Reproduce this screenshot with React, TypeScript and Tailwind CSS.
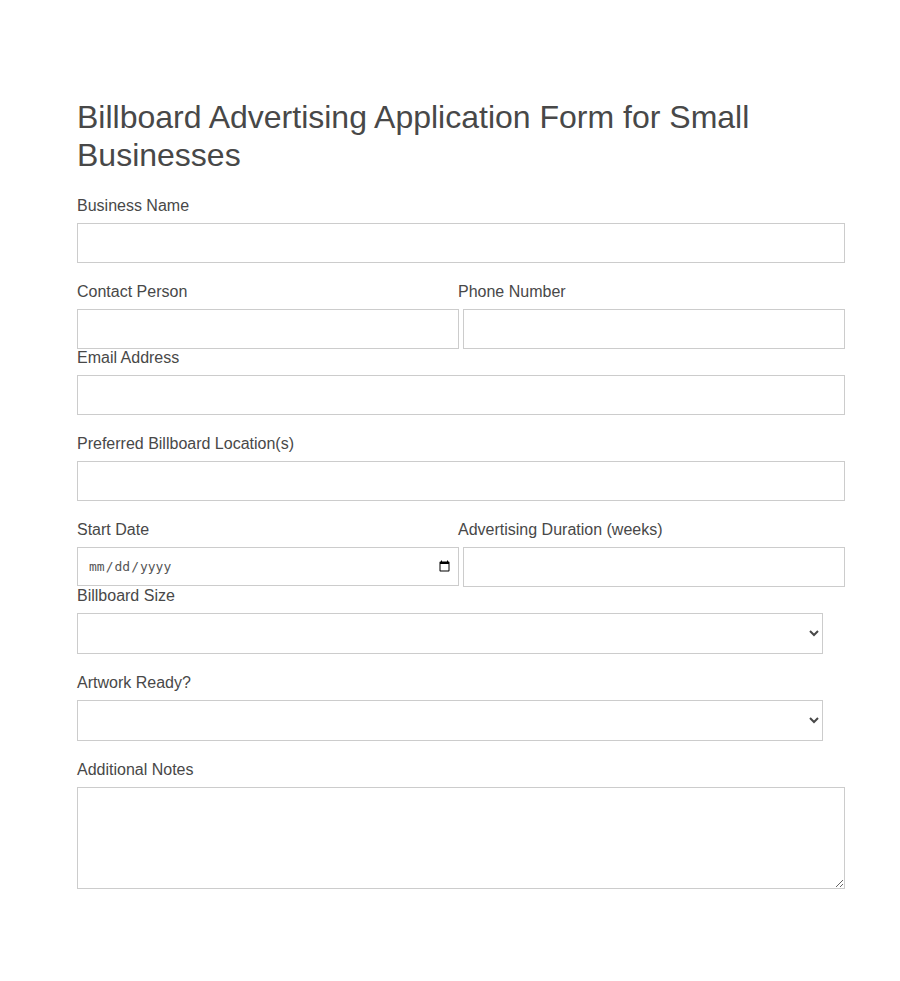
import React from "react";

function Label({ children }: { children: React.ReactNode }) {
  return <label className="block text-base leading-[18px] mb-[8px]">{children}</label>;
}

export default function App() {
  const input = "block h-[40px] w-full border border-[#ccc] bg-white px-[10px] text-base outline-none";
  const select = "block h-[41px] w-[746px] border border-[#ccc] bg-white px-[8px] text-base outline-none";

  return (
    <div className="min-h-[981px] bg-white font-['Liberation_Sans',Arial,sans-serif] text-[#484848]">
      <div className="ml-[77px] w-[768px] pt-[98px]">
        <h1 className="text-[32px] leading-[38.4px] font-normal mb-[22px]">
          Billboard Advertising Application Form for Small Businesses
        </h1>

        {/* Business name */}
        <div className="mb-[20px]">
          <Label>Business Name</Label>
          <input type="text" className={input} />
        </div>

        {/* Contact + phone */}
        <div className="flex items-start">
          <div className="w-[381px]">
            <Label>Contact Person</Label>
            <input type="text" className={input + " !w-[382px]"} />
          </div>
          <div className="flex-1">
            <Label>Phone Number</Label>
            <div className="pl-[5px]">
              <input type="tel" className={input} />
            </div>
          </div>
        </div>

        <div className="mb-[20px]">
          <Label>Email Address</Label>
          <input type="email" className={input} />
        </div>

        <div className="mb-[20px]">
          <Label>Preferred Billboard Location(s)</Label>
          <input type="text" className={input} />
        </div>

        {/* Start date + duration */}
        <div className="flex items-start">
          <div className="w-[381px]">
            <Label>Start Date</Label>
            <input
              type="date"
              className="block h-[39px] w-[382px] border border-[#ccc] bg-white pl-[10px] pr-[5px] font-['DejaVu_Sans_Mono',monospace] text-[13px] text-[#555] outline-none"
            />
          </div>
          <div className="flex-1">
            <Label>Advertising Duration (weeks)</Label>
            <div className="pl-[5px]">
              <input type="number" className={input} />
            </div>
          </div>
        </div>

        <div className="mb-[20px]">
          <Label>Billboard Size</Label>
          <select className={select} defaultValue="">
            <option value=""></option>
            <option>Small</option>
            <option>Medium</option>
            <option>Large</option>
          </select>
        </div>

        <div className="mb-[20px]">
          <Label>Artwork Ready?</Label>
          <select className={select} defaultValue="">
            <option value=""></option>
            <option>Yes</option>
            <option>No</option>
          </select>
        </div>

        <div className="mb-[20px]">
          <Label>Additional Notes</Label>
          <textarea className="block h-[102px] w-full border border-[#ccc] bg-white p-[10px] text-base outline-none" />
        </div>
      </div>
    </div>
  );
}
